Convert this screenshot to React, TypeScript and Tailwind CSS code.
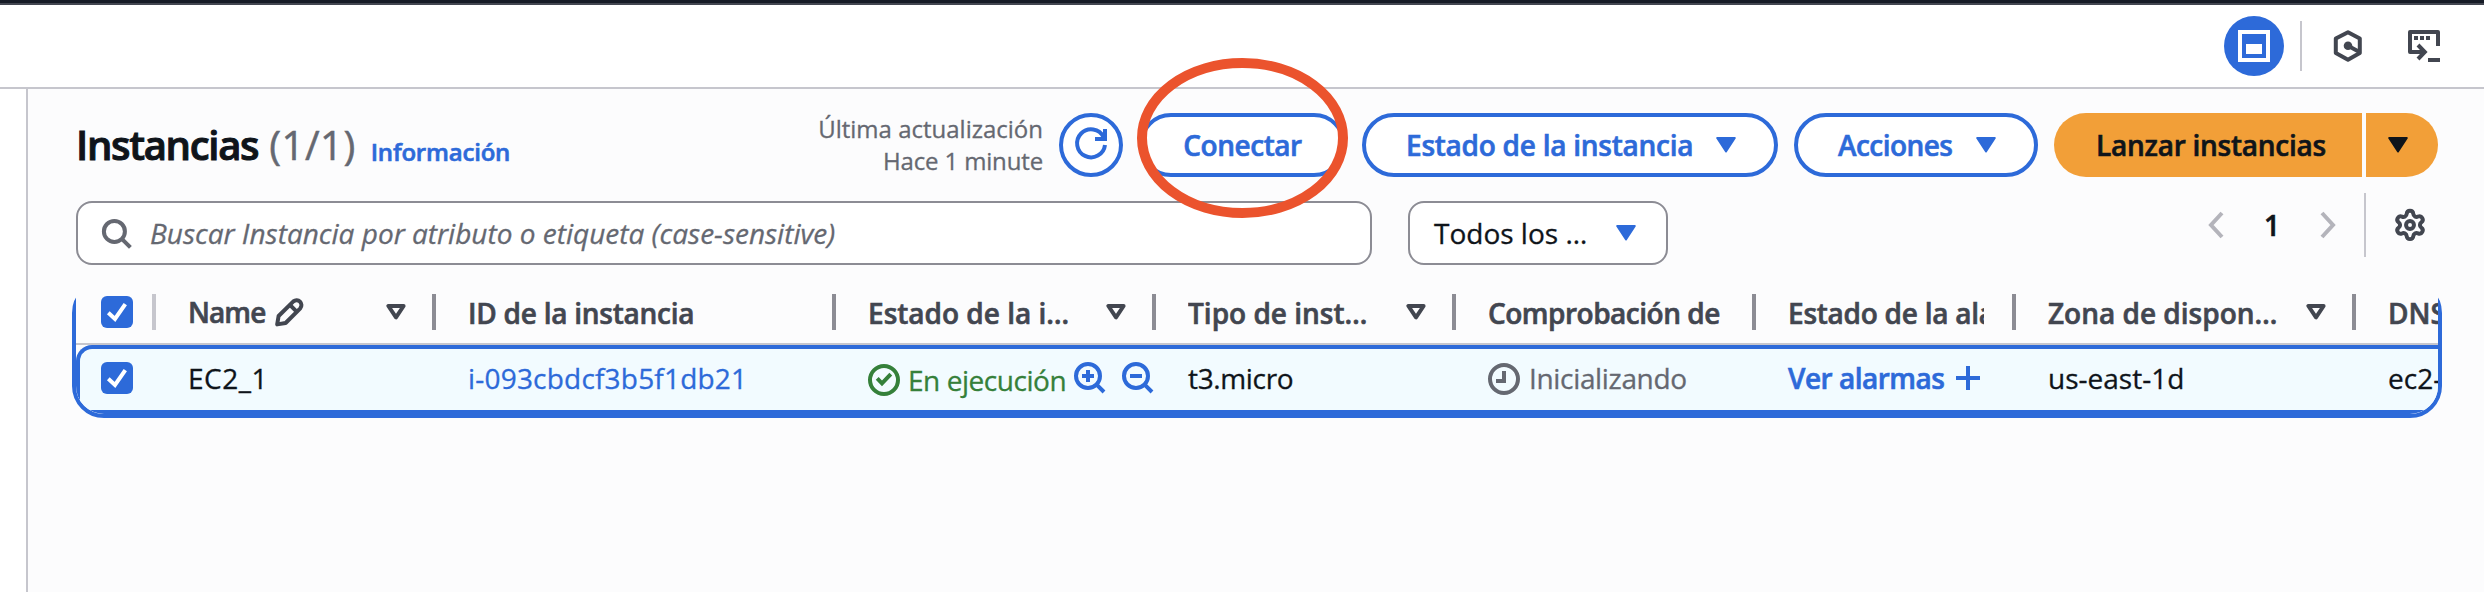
import type { ReactNode } from "react";

function CaretFilled({ className = "" }: { className?: string }) {
  return (
    <svg width="20" height="16" viewBox="0 0 20 16" className={className} fill="currentColor" stroke="currentColor" strokeWidth="2" strokeLinejoin="round">
      <path d="M1.2 1H18.8L10 14.4Z" />
    </svg>
  );
}

function SortCaret({ className = "" }: { className?: string }) {
  return (
    <svg width="20" height="16" viewBox="0 0 20 16" className={className} fill="none" stroke="currentColor" strokeWidth="4" strokeLinejoin="round">
      <path d="M2.4 2H17.6L10 13.4Z" />
    </svg>
  );
}

function Icon16({ children, className = "" }: { children: ReactNode; className?: string }) {
  return (
    <svg width="32" height="32" viewBox="0 0 16 16" className={`shrink-0 overflow-visible ${className}`} fill="none" stroke="currentColor" strokeWidth="2">
      {children}
    </svg>
  );
}

function Checkbox() {
  return (
    <span className="flex size-8 shrink-0 items-center justify-center rounded-md bg-[#2d6ad9]">
      <svg width="32" height="32" viewBox="0 0 32 32" fill="none" stroke="#fff" strokeWidth="4">
        <path d="M7.3 16.8 14 23 24.3 8.2" />
      </svg>
    </span>
  );
}

function HeaderCell({ label, track = "", sort = false, children }: { label?: string; track?: string; sort?: boolean; children?: ReactNode }) {
  return (
    <div className="flex h-[62px] min-w-0 items-center pl-8">
      <div className="flex min-w-0 flex-1 items-center overflow-hidden">
        {label && <span className={`pt-[2px] whitespace-nowrap ${track}`}>{label}</span>}
        {children}
      </div>
      {sort && <SortCaret className="mr-[26px] shrink-0" />}
      <span className={`h-9 w-1 shrink-0 bg-[#8c8c94] ${sort ? "" : "ml-7"}`} />
    </div>
  );
}

const blueButton =
  "flex h-16 shrink-0 items-center rounded-full border-4 border-[#2d6ad9] bg-white font-semibold text-[#2d6ad9] [-webkit-text-stroke:0.6px]";

export default function App() {
  return (
    <div className="flex h-[592px] w-full flex-col overflow-hidden bg-white font-['Open_Sans',sans-serif] text-[28px] text-[#0f141a] [-webkit-text-stroke:0.3px]">
      <div className="h-[5px] shrink-0 border-b-2 border-[#424650] bg-[#161b26]" />
      <header className="flex h-[84px] shrink-0 items-center justify-end border-b-2 border-[#c6c6cd] pr-11 text-[#424650]">
        <button className="flex size-15 items-center justify-center rounded-full bg-[#2d6ad9]">
          <svg width="32" height="32" viewBox="0 0 32 32">
            <rect x="2" y="2" width="28" height="28" fill="none" stroke="#fff" strokeWidth="4" />
            <rect x="8" y="14" width="16" height="10" fill="#fff" />
          </svg>
        </button>
        <span className="ml-4 h-[50px] w-[2px] bg-[#c6c6cd]" />
        <svg className="ml-[30px]" width="32" height="32" viewBox="0 0 32 32" fill="none" stroke="currentColor" strokeWidth="4" strokeLinejoin="round">
          <path d="M16 2.2 27.8 8.6V23L16 29.8 3.8 23V8.6Z" />
          <path d="M16 15.7 27 21.8" />
          <circle cx="16" cy="15.7" r="4.3" fill="currentColor" stroke="none" />
        </svg>
        <svg className="ml-11" width="32" height="32" viewBox="0 0 32 32" fill="none" stroke="currentColor" strokeWidth="4" strokeLinejoin="round">
          <path d="M30 16V2H2V22H17" />
          <path d="M10 15 16.8 22 10 29" strokeLinejoin="miter" />
          <path d="M6 8h4m2 0h4m2 0h4M20 30h12" />
        </svg>
      </header>
      <div className="flex flex-1">
        <div className="w-7 shrink-0 border-r-2 border-[#c6c6cd]" />
        <main className="min-w-0 flex-1 bg-[#fcfcfd] pt-6 pr-[46px] pl-12">
          <div className="flex h-16 items-center">
            <h1 className="text-[40px] leading-[64px] font-semibold tracking-[-1.3px] whitespace-nowrap [-webkit-text-stroke:1px]">
              Instancias
              <span className="ml-[11px] font-normal tracking-[0.5px] text-[#656871] [-webkit-text-stroke:0.5px]">(1/1)</span>
            </h1>
            <a className="ml-[15px] pt-[13px] text-[24px] leading-8 font-semibold tracking-[-0.2px] text-[#2d6ad9] [-webkit-text-stroke:0.6px]">Información</a>
            <div className="ml-auto text-right text-[24px] leading-8 text-[#656871]">
              <div>Última actualización</div>
              <div className="tracking-[-0.15px]">Hace 1 minute</div>
            </div>
            <button className={`${blueButton} ml-4 w-16 justify-center`}>
              <Icon16>
                <path d="M10 5h5V0" />
                <path d="M15 8a7 7 0 1 1-.7-4" />
              </Icon16>
            </button>
            <div className="relative ml-4">
              <button className={`${blueButton} w-[207px] justify-center`}>
                <span className="tracking-[-0.45px]">Conectar</span>
              </button>
              <svg className="absolute -top-[55px] -left-[2px] max-w-none" width="211" height="160" viewBox="0 0 211 160" fill="none">
                <ellipse cx="105.5" cy="80" rx="100.5" ry="75" stroke="#eb532d" strokeWidth="10" />
              </svg>
            </div>
            <button className={`${blueButton} ml-4 w-[416px] pl-10`}>
              <span className="tracking-[-0.25px]">Estado de la instancia</span>
              <CaretFilled className="ml-[23px]" />
            </button>
            <button className={`${blueButton} ml-4 w-[244px] pl-10`}>
              <span className="tracking-[-0.55px]">Acciones</span>
              <CaretFilled className="ml-6" />
            </button>
            <div className="ml-4 flex gap-1 font-semibold [-webkit-text-stroke:0.6px]">
              <button className="flex h-16 w-[308px] items-center rounded-l-full bg-[#f29f38] pl-[42px]">
                <span className="tracking-[-0.25px]">Lanzar instancias</span>
              </button>
              <button className="flex h-16 w-[72px] items-center rounded-r-full bg-[#f29f38] pl-[22px]">
                <CaretFilled />
              </button>
            </div>
          </div>

          <div className="mt-6 flex h-16">
            <div className="flex w-[1296px] items-center rounded-2xl border-2 border-[#8c8c94] bg-white pl-[22px] text-[#656871] italic">
              <Icon16>
                <circle cx="7.2" cy="7.2" r="5.25" />
                <path d="M10.9 10.9 15.2 15.2" />
              </Icon16>
              <span className="ml-[18px]">Buscar Instancia por atributo o etiqueta (case-sensitive)</span>
            </div>
            <div className="ml-9 flex w-[260px] items-center rounded-2xl border-2 border-[#8c8c94] bg-white pl-6">
              <span>Todos los …</span>
              <CaretFilled className="mr-[30px] ml-auto text-[#2d6ad9]" />
            </div>
            <div className="-mt-2 ml-auto flex h-16 items-center">
              <svg width="16" height="28" viewBox="0 0 16 28" fill="none" stroke="#b4b4bb" strokeWidth="4">
                <path d="M14 2 3 14l11 12" />
              </svg>
              <span className="w-[96px] text-center font-semibold [-webkit-text-stroke:0.6px]">1</span>
              <svg width="16" height="28" viewBox="0 0 16 28" fill="none" stroke="#b4b4bb" strokeWidth="4">
                <path d="M2 2l11 12L2 26" />
              </svg>
              <span className="ml-7 h-16 w-[2px] bg-[#c6c6cd]" />
              <svg className="mr-[11px] ml-[27px] text-[#424650]" width="34" height="34" viewBox="0 0 24 24" fill="none" stroke="currentColor" strokeWidth="2.8">
                <path d="M9.671 4.136a2.34 2.34 0 0 1 4.659 0 2.34 2.34 0 0 0 3.319 1.915 2.34 2.34 0 0 1 2.33 4.033 2.34 2.34 0 0 0 0 3.831 2.34 2.34 0 0 1-2.33 4.033 2.34 2.34 0 0 0-3.319 1.915 2.34 2.34 0 0 1-4.659 0 2.34 2.34 0 0 0-3.32-1.915 2.34 2.34 0 0 1-2.33-4.033 2.34 2.34 0 0 0 0-3.831A2.34 2.34 0 0 1 6.35 6.051a2.34 2.34 0 0 0 3.319-1.915" />
                <circle cx="12" cy="12" r="2.8" />
              </svg>
            </div>
          </div>

          <div className="mt-4 -mr-1 -ml-1 h-[137px] rounded-[32px] border-4 border-[#2d6ad9]">
            <div className="-mt-1 grid h-16 grid-cols-[80px_280px_400px_320px_300px_300px_260px_340px_82px] overflow-hidden border-b-2 border-[#c6c6cd] bg-[#fcfcfd] font-semibold text-[#424650] [-webkit-text-stroke:0.6px]">
              <div className="flex items-center pl-[25px]">
                <Checkbox />
                <span className="ml-[19px] h-9 w-1 bg-[#c6c6cd]" />
              </div>
              <HeaderCell sort>
                <span className="-mt-px tracking-[-0.9px]">Name</span>
                <svg className="ml-[10px] shrink-0" width="29" height="29" viewBox="0 0 29 29" fill="none" stroke="currentColor" strokeWidth="4" strokeLinejoin="round">
                  <path d="M2.2 26.4 3.6 18 18.4 3.4a4.9 4.9 0 0 1 6.9 6.9L10.6 25Z" />
                  <path d="M15.2 7.2 21.4 13.4" />
                </svg>
              </HeaderCell>
              <HeaderCell label="ID de la instancia" track="tracking-[-0.25px]" />
              <HeaderCell label="Estado de la i…" sort />
              <HeaderCell label="Tipo de inst…" sort />
              <HeaderCell label="Comprobación de" track="tracking-[-0.5px]" />
              <HeaderCell label="Estado de la alarma" track="tracking-[-0.25px]" />
              <HeaderCell label="Zona de dispon…" sort />
              <div className="flex items-center overflow-hidden pl-8">
                <span className="pt-[2px]">DNS</span>
              </div>
            </div>
            <div className="overflow-hidden rounded-b-[28px]">
              <div className="grid h-[69px] grid-cols-[76px_280px_400px_320px_300px_300px_260px_340px_82px] rounded-tl-2xl border-y-4 border-l-4 border-[#2d6ad9] bg-[#f2fbff] pb-[3px] *:flex *:items-center *:overflow-hidden *:whitespace-nowrap">
                <div className="pl-[21px]">
                  <Checkbox />
                </div>
                <div className="pl-8 tracking-[0.5px]">EC2_1</div>
                <div className="pl-8 tracking-[0.2px] text-[#2d6ad9]">i-093cbdcf3b5f1db21</div>
                <div className="pl-8 text-[#2d6ad9]">
                  <Icon16 className="mt-[3px] text-[#35803a]">
                    <circle cx="8" cy="8" r="7" />
                    <path d="M4.6 7.2 7 9.7l4.4-4.6" />
                  </Icon16>
                  <span className="ml-2 pt-1 tracking-[-0.45px] text-[#35803a]">En ejecución</span>
                  <Icon16 className="ml-2">
                    <circle cx="7" cy="7" r="6" />
                    <path d="M11.2 11.2 15 15M4 7h6M7 4v6" />
                  </Icon16>
                  <Icon16 className="ml-4">
                    <circle cx="7" cy="7" r="6" />
                    <path d="M11.2 11.2 15 15M4 7h6" />
                  </Icon16>
                </div>
                <div className="pl-8 tracking-[-0.35px]">t3.micro</div>
                <div className="pl-8 text-[#656871]">
                  <Icon16 className="mt-[2px]">
                    <circle cx="8" cy="8" r="7" />
                    <path d="M8 4v5H4" />
                  </Icon16>
                  <span className="ml-[9px] tracking-[-0.33px]">Inicializando</span>
                </div>
                <div className="pl-8 font-semibold tracking-[-0.5px] text-[#2d6ad9] [-webkit-text-stroke:0.6px]">
                  Ver alarmas
                  <svg className="ml-3" width="24" height="24" viewBox="0 0 24 24" fill="none" stroke="currentColor" strokeWidth="4">
                    <path d="M12 0v24M0 12h24" />
                  </svg>
                </div>
                <div className="pl-8">us-east-1d</div>
                <div className="pl-8">ec2-</div>
              </div>
            </div>
          </div>
        </main>
      </div>
    </div>
  );
}
